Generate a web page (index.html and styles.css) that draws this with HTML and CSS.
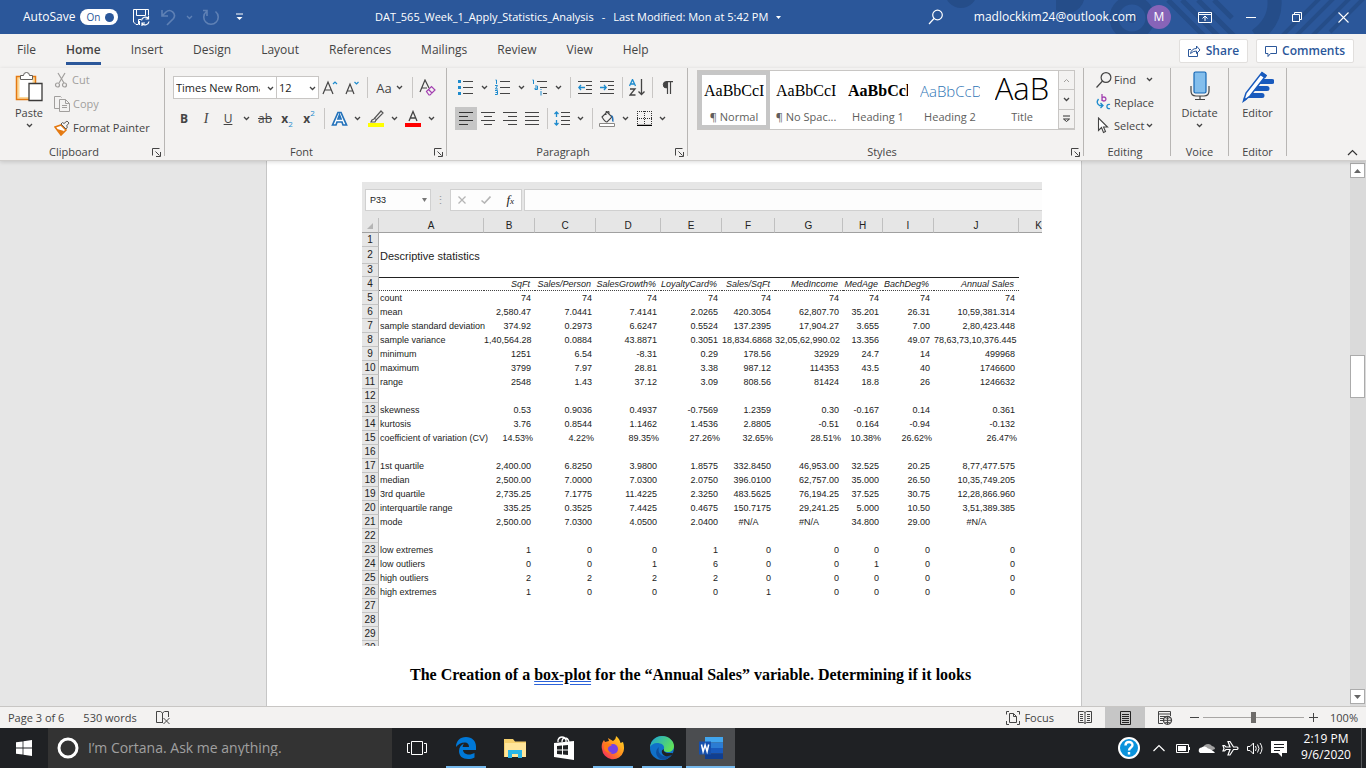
FILE: index.html
```html
<!DOCTYPE html>
<html lang="en">
<head>
    <meta charset="UTF-8">
    <meta name="viewport" content="width=device-width, initial-scale=1.0">
    <title>DAT_565_Week_1_Apply_Statistics_Analysis</title>
    <link rel="stylesheet" href="styles.css">
</head>
<body>
    <!-- Shared icons -->
    <svg class="sprite" aria-hidden="true">
        <symbol id="chev" viewBox="0 0 7 5"><path d="M1 1l2.500 2.500L6 1" fill="none" stroke="currentColor" stroke-width="1.300"/></symbol>
        <symbol id="launch" viewBox="0 0 9 9"><path d="M.5 7.500v-7h7M3.500 3.500l4 4M8.500 4v4.500H4" fill="none" stroke="currentColor"/></symbol>
    </svg>

    <!-- Title Bar -->
    <header class="titlebar">
        <svg class="pattern" viewBox="0 0 430 34" fill="none" stroke="#254d89" aria-hidden="true">
            <circle cx="25" cy="-8" r="12" stroke-width="8"/>
            <path d="M120 0h28a18 18 0 0 1-28 10z" fill="#254d89" stroke="none"/>
            <circle cx="196" cy="18" r="18" stroke-width="9"/><circle cx="196" cy="18" r="5" fill="#254d89" stroke="none"/>
            <path d="M232 0l36 36M246 0l36 36M262 0l36 36M278 0l18 18" stroke-width="5"/>
            <path d="M338-4q4 24-18 40" stroke-width="14"/>
            <path d="M346 36l40-40M360 36l40-40M376 36l40-40M394 32l34-34" stroke-width="4"/>
        </svg>
        <div class="quick">
            <label class="autosave">AutoSave
                <input type="checkbox" class="toggle-input" checked>
                <span class="toggle">On<i></i></span>
            </label>
            <button class="qbtn" aria-label="Save">
                <svg width="17" height="17" viewBox="0 0 17 17" fill="none" stroke="#fff"><path d="M5 15.500H3L.5 13V.5h15v6M3.500.5v6h9v-6M5.500 15.500v-5H8M6.500 12v4"/><path d="M8.500 11.500a4 4 0 0 1 7-2M15.500 7v3h-3M16 12.500a4 4 0 0 1-7 2M9 17v-3h3" stroke-width="1.200"/></svg>
            </button>
            <button class="qbtn dim" aria-label="Undo">
                <svg width="16" height="17" viewBox="0 0 16 17" fill="none" stroke="currentColor" stroke-width="1.600"><path d="M1 1v6h6M1 7l4-4a5 5 0 0 1 7.500 6.500L6 16"/></svg>
            </button>
            <button class="qdrop dim" aria-label="Undo list"><svg width="7" height="5"><use href="#chev"/></svg></button>
            <button class="qbtn dim" aria-label="Redo">
                <svg width="17" height="17" viewBox="0 0 17 17" fill="none" stroke="currentColor" stroke-width="1.600"><path d="M12.500 2.500a7.200 7.200 0 1 1-9 0M4 7V1.500h-4"/></svg>
            </button>
            <button class="qbtn" aria-label="Customize toolbar">
                <svg width="9" height="8" viewBox="0 0 9 8" fill="none" stroke="#fff"><path d="M1 1h7"/><path d="M1.500 4h6l-3 3z" fill="#fff" stroke="none"/></svg>
            </button>
        </div>
        <div class="doc-title"><span>DAT_565_Week_1_Apply_Statistics_Analysis</span><span>-</span><span>Last Modified: Mon at 5:42 PM</span>
            <svg width="5" height="3" viewBox="0 0 5 3"><path d="M0 0h5L2.500 3z" fill="#fff"/></svg>
        </div>
        <div class="account">
            <button class="search-btn" aria-label="Search"><svg width="16" height="16" viewBox="0 0 16 16" fill="none" stroke="#fff" stroke-width="1.200"><circle cx="9.500" cy="6" r="4.800"/><path d="M6 9.500L1 15"/></svg></button>
            <span class="email">madlockkim24@outlook.com</span>
            <span class="avatar">M</span>
        </div>
        <div class="window-btns">
            <button aria-label="Ribbon display options"><svg width="14" height="11" viewBox="0 0 14 11" fill="none" stroke="#fff"><path d="M.5.5h13v10H.5zM.5 2.500h13M7 9V4.500M4.500 6.500L7 4l2.500 2.500"/></svg></button>
            <button aria-label="Minimize"><svg width="10" height="11" viewBox="0 0 10 11" stroke="#fff"><path d="M0 5.500h10"/></svg></button>
            <button aria-label="Restore"><svg width="10" height="10" viewBox="0 0 10 10" fill="none" stroke="#fff"><path d="M.5 2.500h7v7h-7zM2.500 2.500v-2h7v7h-2"/></svg></button>
            <button aria-label="Close"><svg width="11" height="11" viewBox="0 0 11 11" fill="none" stroke="#fff" stroke-width="1.100"><path d="M.5.5l10 10M10.500.5l-10 10"/></svg></button>
        </div>
    </header>

    <!-- Ribbon Tabs -->
    <nav class="tabs">
        <a href="#">File</a>
        <a href="#" class="active">Home</a>
        <a href="#">Insert</a>
        <a href="#">Design</a>
        <a href="#">Layout</a>
        <a href="#">References</a>
        <a href="#">Mailings</a>
        <a href="#">Review</a>
        <a href="#">View</a>
        <a href="#">Help</a>
        <div class="tab-actions">
            <button><svg width="13" height="12" viewBox="0 0 13 12" fill="none" stroke="#2b579a"><path d="M3 4.500H.5v7h9V8M2.500 8.500q1-5 6-5V1l3.500 4-3.500 3.500V6Q5 6 2.500 8.500z"/></svg>Share</button>
            <button><svg width="12" height="11" viewBox="0 0 12 11" fill="none" stroke="#2b579a"><path d="M.5.5h11v7h-6l-2.500 3v-3H.5z"/></svg>Comments</button>
        </div>
    </nav>

    <!-- Ribbon -->
    <div class="ribbon">
        <section class="group clipboard">
            <div class="group-body">
                <button class="big">
                    <svg width="28" height="32" viewBox="0 0 28 32"><path d="M1.500 5.500h19v23h-19z" fill="#fbd99b" stroke="#e47911" stroke-width="1.500"/><path d="M4.500 8h13v18h-13z" fill="#fff"/><path d="M5.500 8.500v-4h3q0-3 3-3t3 3h3v4z" fill="#fff" stroke="#605e5c"/><path d="M14 12.500h13v17H14z" fill="#fff" stroke="#3b3a39" stroke-width="1.300"/></svg>
                    Paste
                    <svg width="7" height="5"><use href="#chev"/></svg>
                </button>
                <div class="stack">
                    <button class="off"><svg width="15" height="17" viewBox="0 0 15 17" fill="none" stroke="#a19f9d" stroke-width="1.200"><path d="M4 1l6 10M11 1L5 11"/><circle cx="3.500" cy="13" r="2"/><circle cx="10.500" cy="13" r="2"/></svg>Cut</button>
                    <button class="off"><svg width="16" height="16" viewBox="0 0 16 16" fill="none" stroke="#a19f9d"><path d="M5 12.500H.5V.5h6l1 1M5.500 3.500h6l4 4v8h-10zM11.500 3.500v4h4M8 9.500h5M8 11.500h5"/></svg>Copy</button>
                    <button><svg width="16" height="16" viewBox="0 0 16 16"><path d="M1 7l6-2 5 5-5 5z" fill="#fff" stroke="#e47911" stroke-width="1.600"/><path d="M3 9l7 2-3 4z" fill="#e47911"/><path d="M7 4l5 5 1.500-2-1-1L15 3l-2-2-3 2.500-1.500-1z" fill="#f3f2f1" stroke="#605e5c"/></svg>Format Painter</button>
                </div>
            </div>
            <div class="group-label">Clipboard<button aria-label="Clipboard options"><svg width="9" height="9"><use href="#launch"/></svg></button></div>
        </section>

        <section class="group font">
            <div class="row">
                <span class="combo combo-name">
                    <select aria-label="Font"><option>Times New Roman</option></select>
                    <svg width="7" height="5"><use href="#chev"/></svg>
                </span>
                <span class="combo combo-size">
                    <select aria-label="Font size"><option>12</option></select>
                    <svg width="7" height="5"><use href="#chev"/></svg>
                </span>
                <button class="tool" aria-label="Grow font"><svg width="16" height="16" viewBox="0 0 16 16" fill="none" stroke="#444" stroke-width="1.200"><path d="M1 14L6 2l5 12M3 10h6"/><path d="M11 4l2-2 2 2" stroke="#1e8bcd"/></svg></button>
                <button class="tool" aria-label="Shrink font"><svg width="16" height="16" viewBox="0 0 16 16" fill="none" stroke="#444" stroke-width="1.200"><path d="M2 14l4-10 4 10M3.500 11h5"/><path d="M10.500 2l2 2 2-2" stroke="#1e8bcd"/></svg></button>
                <i class="sep"></i>
                <button class="case">Aa <svg width="7" height="5"><use href="#chev"/></svg></button>
                <i class="sep"></i>
                <button class="tool" aria-label="Clear formatting"><svg width="17" height="17" viewBox="0 0 17 17" fill="none" stroke="#444" stroke-width="1.200"><path d="M1 13L6 1l4 8M3 9h5"/><path d="M7.500 12.500l5-5 3.500 3.500-5 5h-1zM9.500 10.500l3.500 3.500" stroke="#a23fb0"/></svg></button>
            </div>
            <div class="row">
                <button class="tool"><b>B</b></button>
                <button class="tool serif"><em>I</em></button>
                <button class="tool"><u>U</u></button>
                <button class="drop" aria-label="Underline style"><svg width="7" height="5"><use href="#chev"/></svg></button>
                <button class="tool"><s>ab</s></button>
                <button class="tool"><b>x</b><sub>2</sub></button>
                <button class="tool"><b>x</b><sup>2</sup></button>
                <i class="sep"></i>
                <button class="tool" aria-label="Text effects"><svg width="17" height="16" viewBox="0 0 17 16"><path d="M1.500 14L7 1.500h3L15.500 14h-3.500l-1-3H6l-1 3zM7 8h3L8.500 4z" fill="#fff" stroke="#2372ba" stroke-width="1.700"/></svg></button>
                <button class="drop" aria-label="Effect list"><svg width="7" height="5"><use href="#chev"/></svg></button>
                <button class="tool" aria-label="Highlight"><svg width="16" height="17" viewBox="0 0 16 17"><path d="M4 10l2-1 7-8 2 2-7 7-1 2H3z" fill="#f3f2f1" stroke="#555" stroke-width="1.200"/><path d="M6 8l3 2" stroke="#555"/><path d="M0 13h16v4H0z" fill="#ff0"/></svg></button>
                <button class="drop" aria-label="Highlight color"><svg width="7" height="5"><use href="#chev"/></svg></button>
                <button class="tool" aria-label="Font color"><svg width="16" height="17" viewBox="0 0 16 17"><path d="M4 11l4-9.500L12 11M5.500 8h5" fill="none" stroke="#444" stroke-width="1.300"/><path d="M0 13h16v4H0z" fill="#f00"/></svg></button>
                <button class="drop" aria-label="Font color list"><svg width="7" height="5"><use href="#chev"/></svg></button>
            </div>
            <div class="group-label">Font<button aria-label="Font options"><svg width="9" height="9"><use href="#launch"/></svg></button></div>
        </section>

        <section class="group paragraph">
            <div class="row">
                <button class="tool" aria-label="Bullets"><svg width="16" height="16" viewBox="0 0 16 16"><path d="M0 0h3v3H0zM0 6h3v3H0zM0 12h3v3H0z" fill="#1e8bcd"/><path d="M5 1.500h10M5 7.500h10M5 13.500h10" stroke="#444"/></svg></button>
                <button class="drop" aria-label="Bullet list"><svg width="7" height="5"><use href="#chev"/></svg></button>
                <button class="tool" aria-label="Numbering"><svg width="16" height="17" viewBox="0 0 16 17"><path d="M.5 1h1v4M0 6.500h2.500L.5 10H3M0 11.500h2.500v4H0M.5 13.500h2" fill="none" stroke="#1e8bcd"/><path d="M5 2.500h10M5 8.500h10M5 14.500h10" stroke="#444"/></svg></button>
                <button class="drop" aria-label="Number list"><svg width="7" height="5"><use href="#chev"/></svg></button>
                <button class="tool" aria-label="Multilevel list"><svg width="16" height="17" viewBox="0 0 16 17"><path d="M.5 1h1v4M3 7h2.500v3.500H3V9h2.500M9 12v4.500M9 10v1" fill="none" stroke="#1e8bcd"/><path d="M5 2.500h10M8 8.500h7M11 14.500h4" stroke="#444"/></svg></button>
                <button class="drop" aria-label="Multilevel styles"><svg width="7" height="5"><use href="#chev"/></svg></button>
                <i class="sep"></i>
                <button class="tool" aria-label="Decrease indent"><svg width="15" height="14" viewBox="0 0 15 14" fill="none" stroke="#444"><path d="M0 .5h14M8 4.500h6M8 8.500h6M0 12.500h14"/><path d="M7 6.500H1M3 4L.8 6.500 3 9" stroke="#1e8bcd" stroke-width="1.300"/></svg></button>
                <button class="tool" aria-label="Increase indent"><svg width="15" height="14" viewBox="0 0 15 14" fill="none" stroke="#444"><path d="M0 .5h14M8 4.500h6M8 8.500h6M0 12.500h14"/><path d="M0 6.500h6M4 4l2.200 2.500L4 9" stroke="#1e8bcd" stroke-width="1.300"/></svg></button>
                <i class="sep"></i>
                <button class="tool" aria-label="Sort"><svg width="17" height="17" viewBox="0 0 17 17" fill="none" stroke="#444" stroke-width="1.300"><path d="M.5 7L3.500.5l3 6.500M1.500 5h4" stroke="#1e8bcd"/><path d="M1 10h5l-5 6h5.500M12.500 0v15.500M9.500 12.500l3 3 3-3"/></svg></button>
                <i class="sep"></i>
                <button class="tool" aria-label="Show marks"><svg width="11" height="13" viewBox="0 0 11 13"><path d="M4.500 7a3.200 3.200 0 0 1 0-6.500z" fill="#444" stroke="#444"/><path d="M4 .6h7M5.500.5V13M8.500.5V13" stroke="#444" fill="none" stroke-width="1.200"/></svg></button>
            </div>
            <div class="row">
                <button class="tool on" aria-label="Align left"><svg width="14" height="14" viewBox="0 0 14 14" stroke="#333"><path d="M0 .5h14M0 4.500h9M0 8.500h14M0 12.500h9"/></svg></button>
                <button class="tool" aria-label="Center"><svg width="14" height="14" viewBox="0 0 14 14" stroke="#444"><path d="M0 .5h14M3 4.500h8M0 8.500h14M3 12.500h8"/></svg></button>
                <button class="tool" aria-label="Align right"><svg width="14" height="14" viewBox="0 0 14 14" stroke="#444"><path d="M0 .5h14M5 4.500h9M0 8.500h14M5 12.500h9"/></svg></button>
                <button class="tool" aria-label="Justify"><svg width="14" height="14" viewBox="0 0 14 14" stroke="#444"><path d="M0 .5h14M0 4.500h14M0 8.500h14M0 12.500h14"/></svg></button>
                <i class="sep"></i>
                <button class="tool" aria-label="Line spacing"><svg width="16" height="15" viewBox="0 0 16 15" fill="none" stroke="#444"><path d="M7 1.500h9M7 5.500h9M7 9.500h9M7 13.500h9"/><path d="M2.500 1v5M.5 3l2-2 2 2M2.500 9v5M.5 12l2 2 2-2" stroke="#1e8bcd" stroke-width="1.300"/></svg></button>
                <button class="drop" aria-label="Spacing list"><svg width="7" height="5"><use href="#chev"/></svg></button>
                <i class="sep"></i>
                <button class="tool" aria-label="Shading"><svg width="17" height="16" viewBox="0 0 17 16"><path d="M3 6l5-5 5 5-5 5q-2 0-5-5zM7 4V1.500a1.500 1.500 0 0 1 3 0V4" fill="#f3f2f1" stroke="#444" stroke-width="1.100"/><path d="M12 4q3 0 2.500 7-2 0-1.500-4z" fill="#2372ba"/><path d="M.5 12.500h15v3H.5z" fill="#fff" stroke="#8a8886"/></svg></button>
                <button class="drop" aria-label="Shading color"><svg width="7" height="5"><use href="#chev"/></svg></button>
                <button class="tool" aria-label="Borders"><svg width="15" height="15" viewBox="0 0 15 15" fill="none" stroke="#333"><path d="M.5 0v14M14.500 0v14M0 .5h15M7.500 0v14M0 7.500h15" stroke-dasharray="1 1"/><path d="M0 14.500h15" stroke="#000" stroke-width="1.500"/></svg></button>
                <button class="drop" aria-label="Border list"><svg width="7" height="5"><use href="#chev"/></svg></button>
            </div>
            <div class="group-label">Paragraph<button aria-label="Paragraph options"><svg width="9" height="9"><use href="#launch"/></svg></button></div>
        </section>

        <section class="group styles">
            <div class="gallery">
                <button class="style selected"><span class="sample">AaBbCcI</span>¶ Normal</button>
                <button class="style"><span class="sample">AaBbCcI</span>¶ No Spac...</button>
                <button class="style"><span class="sample strong">AaBbCcl</span>Heading 1</button>
                <button class="style"><span class="sample blue">AaBbCcD</span>Heading 2</button>
                <button class="style"><span class="sample title">AaB</span>Title</button>
                <div class="gallery-nav">
                    <button class="faint" aria-label="Previous styles"><svg width="7" height="5" viewBox="0 0 7 5"><path d="M1 4l2.500-2.500L6 4" fill="none" stroke="currentColor"/></svg></button>
                    <button aria-label="Next styles"><svg width="7" height="5"><use href="#chev"/></svg></button>
                    <button aria-label="More styles"><svg width="9" height="8" viewBox="0 0 9 8" fill="none" stroke="#333"><path d="M1 1h7M1.500 4l3 2.500 3-2.500z"/></svg></button>
                </div>
            </div>
            <div class="group-label">Styles<button aria-label="Styles options"><svg width="9" height="9"><use href="#launch"/></svg></button></div>
        </section>

        <section class="group editing">
            <div class="stack">
                <button><svg width="16" height="16" viewBox="0 0 16 16" fill="none" stroke="#444" stroke-width="1.200"><circle cx="10" cy="5.500" r="4.900"/><path d="M6.500 9L.5 15.500"/></svg>Find <svg class="after" width="7" height="5"><use href="#chev"/></svg></button>
                <button><svg width="16" height="17" viewBox="0 0 16 17" fill="none" stroke-width="1.300"><path d="M6 0v7M6 4.500a2 2 0 1 1 0 1" stroke="#a23fb0"/><path d="M14 10.500a2.200 2.200 0 1 0 0 4M2.500 5q-3 4 1 6.500h3M4.500 9l2.500 2.500L4.500 14" stroke="#1e8bcd"/></svg>Replace</button>
                <button><svg width="16" height="17" viewBox="0 0 16 17" fill="#fff" stroke="#444" stroke-width="1.100"><path d="M2.500 1v12.500l3-3 2 5 2-1-2-4.500h4z"/></svg>Select <svg width="7" height="5"><use href="#chev"/></svg></button>
            </div>
            <div class="group-label">Editing</div>
        </section>

        <section class="group voice">
            <button class="big">
                <svg width="20" height="32" viewBox="0 0 20 32" fill="none" stroke="#444" stroke-width="1.200"><path d="M1 15v5q0 5 5 5h8q5 0 5-5v-5M10 25v3M5 28.500h10"/><rect x="4" y="1" width="12" height="21" rx="1.500" fill="#83beec" stroke="#1467b4"/></svg>
                Dictate
                <svg width="7" height="5"><use href="#chev"/></svg>
            </button>
            <div class="group-label">Voice</div>
        </section>

        <section class="group voice">
            <button class="big">
                <svg width="32" height="32" viewBox="0 0 32 32"><path d="M18 8h12a2.300 2.300 0 0 1 0 5H16zM14 15h11a2.300 2.300 0 0 1 0 5H11zM10 22h10a2.300 2.300 0 0 1 0 5H4z" fill="#185abd"/><path d="M20 1.500l4 3L8 25l-6.500 5L4 22z" fill="#fff" stroke="#185abd" stroke-width="1.500"/><path d="M20 1l5 3.500-2 3-5-3.500zM1 31l1-5 3 2.500z" fill="#185abd"/></svg>
                Editor
            </button>
            <div class="group-label">Editor</div>
        </section>

        <div class="ribbon-end">
            <button aria-label="Collapse ribbon"><svg width="11" height="7" viewBox="0 0 11 7" fill="none" stroke="#333" stroke-width="1.200"><path d="M1 6l4.500-4.500L10 6"/></svg></button>
        </div>
    </div>

    <!-- Document -->
    <main class="workspace">
        <div class="canvas">
            <article class="page">
                <div class="sheet">
                    <div class="formula-bar">
                        <div class="name-box">P33<svg width="5" height="4" viewBox="0 0 5 4"><path d="M0 0h5L2.500 4z" fill="#777"/></svg></div>
                        <span class="dots">⋮</span>
                        <div class="fx">
                            <svg width="8" height="8" viewBox="0 0 8 8" stroke="#b5b5b5" stroke-width="1.300"><path d="M.5.5l7 7M7.500.5l-7 7"/></svg>
                            <svg width="10" height="8" viewBox="0 0 10 8" fill="none" stroke="#b5b5b5" stroke-width="1.600"><path d="M.5 4.500L3.500 7l6-6.500"/></svg>
                            <em>f<small>x</small></em>
                        </div>
                        <div class="formula"></div>
                    </div>
                    <table>
                        <colgroup>
                            <col class="c-num"><col class="c-a"><col class="c-b"><col class="c-c"><col class="c-d"><col class="c-c"><col class="c-f"><col class="c-g"><col class="c-h"><col class="c-b"><col class="c-j"><col class="c-k">
                        </colgroup>
                        <thead>
                            <tr><th><svg width="6" height="6" viewBox="0 0 6 6"><path d="M6 0v6H0z" fill="#b5b5b5"/></svg></th><th>A</th><th>B</th><th>C</th><th>D</th><th>E</th><th>F</th><th>G</th><th>H</th><th>I</th><th>J</th><th class="cut">K</th></tr>
                        </thead>
                        <tbody>
                            <tr><th>1</th><td colspan="11"></td></tr>
                            <tr class="heading"><th>2</th><td colspan="11">Descriptive statistics</td></tr>
                            <tr class="low"><th>3</th><td colspan="11"></td></tr>
                            <tr class="names"><th>4</th><td></td><td>SqFt</td><td>Sales/Person</td><td>SalesGrowth%</td><td>LoyaltyCard%</td><td>Sales/SqFt</td><td>MedIncome</td><td>MedAge</td><td>BachDeg%</td><td>Annual Sales</td></tr>
                            <tr><th>5</th><td>count</td><td>74</td><td>74</td><td>74</td><td>74</td><td>74</td><td>74</td><td>74</td><td>74</td><td>74</td></tr>
                            <tr><th>6</th><td>mean</td><td>2,580.47</td><td>7.0441</td><td>7.4141</td><td>2.0265</td><td>420.3054</td><td>62,807.70</td><td>35.201</td><td>26.31</td><td>10,59,381.314</td></tr>
                            <tr><th>7</th><td>sample standard deviation</td><td>374.92</td><td>0.2973</td><td>6.6247</td><td>0.5524</td><td>137.2395</td><td>17,904.27</td><td>3.655</td><td>7.00</td><td>2,80,423.448</td></tr>
                            <tr><th>8</th><td>sample variance</td><td>1,40,564.28</td><td>0.0884</td><td>43.8871</td><td>0.3051</td><td>18,834.6868</td><td>32,05,62,990.02</td><td>13.356</td><td>49.07</td><td>78,63,73,10,376.445</td></tr>
                            <tr><th>9</th><td>minimum</td><td>1251</td><td>6.54</td><td>-8.31</td><td>0.29</td><td>178.56</td><td>32929</td><td>24.7</td><td>14</td><td>499968</td></tr>
                            <tr><th>10</th><td>maximum</td><td>3799</td><td>7.97</td><td>28.81</td><td>3.38</td><td>987.12</td><td>114353</td><td>43.5</td><td>40</td><td>1746600</td></tr>
                            <tr><th>11</th><td>range</td><td>2548</td><td>1.43</td><td>37.12</td><td>3.09</td><td>808.56</td><td>81424</td><td>18.8</td><td>26</td><td>1246632</td></tr>
                            <tr><th>12</th><td colspan="11"></td></tr>
                            <tr><th>13</th><td>skewness</td><td>0.53</td><td>0.9036</td><td>0.4937</td><td>-0.7569</td><td>1.2359</td><td>0.30</td><td>-0.167</td><td>0.14</td><td>0.361</td></tr>
                            <tr><th>14</th><td>kurtosis</td><td>3.76</td><td>0.8544</td><td>1.1462</td><td>1.4536</td><td>2.8805</td><td>-0.51</td><td>0.164</td><td>-0.94</td><td>-0.132</td></tr>
                            <tr class="percent"><th>15</th><td>coefficient of variation (CV)</td><td>14.53%</td><td>4.22%</td><td>89.35%</td><td>27.26%</td><td>32.65%</td><td>28.51%</td><td>10.38%</td><td>26.62%</td><td>26.47%</td></tr>
                            <tr><th>16</th><td colspan="11"></td></tr>
                            <tr><th>17</th><td>1st quartile</td><td>2,400.00</td><td>6.8250</td><td>3.9800</td><td>1.8575</td><td>332.8450</td><td>46,953.00</td><td>32.525</td><td>20.25</td><td>8,77,477.575</td></tr>
                            <tr><th>18</th><td>median</td><td>2,500.00</td><td>7.0000</td><td>7.0300</td><td>2.0750</td><td>396.0100</td><td>62,757.00</td><td>35.000</td><td>26.50</td><td>10,35,749.205</td></tr>
                            <tr><th>19</th><td>3rd quartile</td><td>2,735.25</td><td>7.1775</td><td>11.4225</td><td>2.3250</td><td>483.5625</td><td>76,194.25</td><td>37.525</td><td>30.75</td><td>12,28,866.960</td></tr>
                            <tr><th>20</th><td>interquartile range</td><td>335.25</td><td>0.3525</td><td>7.4425</td><td>0.4675</td><td>150.7175</td><td>29,241.25</td><td>5.000</td><td>10.50</td><td>3,51,389.385</td></tr>
                            <tr><th>21</th><td>mode</td><td>2,500.00</td><td>7.0300</td><td>4.0500</td><td>2.0400</td><td class="na">#N/A</td><td class="na">#N/A</td><td>34.800</td><td>29.00</td><td class="na">#N/A</td></tr>
                            <tr><th>22</th><td colspan="11"></td></tr>
                            <tr><th>23</th><td>low extremes</td><td>1</td><td>0</td><td>0</td><td>1</td><td>0</td><td>0</td><td>0</td><td>0</td><td>0</td></tr>
                            <tr><th>24</th><td>low outliers</td><td>0</td><td>0</td><td>1</td><td>6</td><td>0</td><td>0</td><td>1</td><td>0</td><td>0</td></tr>
                            <tr><th>25</th><td>high outliers</td><td>2</td><td>2</td><td>2</td><td>2</td><td>0</td><td>0</td><td>0</td><td>0</td><td>0</td></tr>
                            <tr><th>26</th><td>high extremes</td><td>1</td><td>0</td><td>0</td><td>0</td><td>1</td><td>0</td><td>0</td><td>0</td><td>0</td></tr>
                            <tr><th>27</th><td colspan="11"></td></tr>
                            <tr><th>28</th><td colspan="11"></td></tr>
                            <tr><th>29</th><td colspan="11"></td></tr>
                            <tr><th>30</th><td colspan="11"></td></tr>
                        </tbody>
                    </table>
                </div>
                <p>The Creation of a <span class="grammar">box-plot</span> for the “Annual Sales” variable. Determining if it looks</p>
            </article>
        </div>
        <div class="scrollbar">
            <button aria-label="Scroll up"><svg width="7" height="4" viewBox="0 0 7 4"><path d="M3.500 0L7 4H0z" fill="#666"/></svg></button>
            <div class="thumb"></div>
            <button aria-label="Scroll down"><svg width="7" height="4" viewBox="0 0 7 4"><path d="M0 0h7L3.500 4z" fill="#666"/></svg></button>
        </div>
    </main>

    <!-- Status Bar -->
    <footer class="status">
        <span>Page 3 of 6</span>
        <span>530 words</span>
        <svg width="15" height="14" viewBox="0 0 15 14" fill="none" stroke="#444"><path d="M6.500 11.500h-6V.5h4l2 1.500v10M6.500 2l2-1.500h4V6M7.500 7l6 6M13.500 7l-6 6"/></svg>
        <div class="views">
            <button class="focus"><svg width="14" height="14" viewBox="0 0 14 14" fill="none" stroke="#444"><path d="M3 .5H.5v3M11 .5h2.500v3M.5 10v3.500H3M13.500 10v3.500H11M3.500 2.500h4l3 3v6h-7zM7.500 2.500v3h3"/></svg>Focus</button>
            <button class="view" aria-label="Read mode"><svg width="14" height="13" viewBox="0 0 14 13" fill="none" stroke="#444"><path d="M.5.500h5l1.500 1 1.500-1h5v11h-5l-1.500 1-1.500-1h-5zM7 1.500v11M2 3.500h3M2 5.500h3M2 7.500h3M2 9.500h3M9 3.500h3M9 5.500h3M9 7.500h3M9 9.500h3"/></svg></button>
            <button class="view on" aria-label="Print layout"><svg width="11" height="14" viewBox="0 0 11 14" fill="none" stroke="#222"><path d="M.5.500h10v13H.5zM2 3.500h7M2 5.500h7M2 7.500h7M2 9.500h7M2 11.500h7"/></svg></button>
            <button class="view" aria-label="Web layout"><svg width="15" height="14" viewBox="0 0 15 14" fill="none" stroke="#444"><path d="M5 12.500H.5V.500h12V5M.5 3h12M2 5.500h6M2 7.500h4M2 9.500h3"/><circle cx="9.500" cy="9.300" r="4" fill="#f3f2f1" stroke-width="1.300"/><path d="M5.500 9.300h8M9.500 5.300v8M7 6.500q2.500 2 5 0M7 12q2.500-2 5 0"/></svg></button>
            <button class="step" aria-label="Zoom out"><svg width="9" height="9" viewBox="0 0 9 9" stroke="#444"><path d="M0 4.500h9"/></svg></button>
            <input type="range" class="zoom" min="0" max="100" value="50" aria-label="Zoom">
            <button class="step" aria-label="Zoom in"><svg width="9" height="9" viewBox="0 0 9 9" stroke="#444"><path d="M0 4.500h9M4.500 0v9"/></svg></button>
            <span class="percent-label">100%</span>
        </div>
    </footer>

    <!-- Taskbar -->
    <div class="taskbar">
        <button class="start" aria-label="Start"><svg width="16" height="16" viewBox="0 0 16 16" fill="#fff"><path d="M0 2.300L6.600 1.400v6.200H0zM7.400 1.300L16 0v7.600H7.400zM0 8.400h6.600v6.200L0 13.700zM7.400 8.400H16V16l-8.600-1.300z"/></svg></button>
        <label class="cortana">
            <svg width="22" height="22" viewBox="0 0 22 22"><circle cx="11" cy="11" r="9" fill="none" stroke="#fff" stroke-width="3"/></svg>
            <input type="text" placeholder="I’m Cortana. Ask me anything.">
        </label>
        <div class="apps">
            <button aria-label="Task view"><svg width="20" height="14" viewBox="0 0 20 14" fill="none" stroke="#fff"><path d="M4.500.500h11v13h-11zM3 2.500H.5v9H3M17 2.500h2.500v9H17"/></svg></button>
            <button class="open" aria-label="Edge Legacy"><svg width="22" height="22" viewBox="0 0 22 22"><path d="M1 10C1 4 5 0 11 0c6 0 10 4 10 9.500V13H8c.2 3 3 4.500 6 4.500 2 0 4-.6 5.500-1.500v4.500c-2 1-4 1.500-6.500 1.500-5.500 0-9-3-9-8 0-3.500 2-6 5-7.500C8 8 7.700 9 7.700 10H14c0-3-1.500-4.500-4-4.500C6 5.500 3 7.500 1 10z" fill="#0078d7"/></svg></button>
            <button aria-label="File Explorer"><svg width="22" height="19" viewBox="0 0 22 19"><path d="M0 0h9l2 2.500h11V18H0z" fill="#f5d06d"/><path d="M1 4h21v14H1z" fill="#ffe59a"/><path d="M4 19v-8h14v8h-4v-4H8v4z" fill="#29b6e8"/></svg></button>
            <button aria-label="Store"><svg width="22" height="24" viewBox="0 0 22 24"><path d="M1 7l20-2v19L1 21z" fill="#fff"/><path d="M5 6V4q1-3 4-3t4 3v2M9 6q0-4 3-4t4 4" fill="none" stroke="#fff" stroke-width="1.300"/><path d="M4 10l5-.5v4H4zM10 9.400l5-.4v4.500h-5zM4 14.500h5v4L4 18zM10 14.500h5V19l-5-.5z" fill="#202224"/></svg></button>
            <button class="open" aria-label="Firefox">
                <svg width="24" height="24" viewBox="0 0 24 24">
                    <defs><linearGradient id="fox" x1="1" y1="0" x2="0" y2="1"><stop offset="0" stop-color="#ffe226"/><stop offset=".5" stop-color="#ff8a1e"/><stop offset="1" stop-color="#f5156c"/></linearGradient></defs>
                    <path d="M15 0c3 2 4 5 4.500 7L22 6c1 3 1.500 6 .5 9.500A11 11 0 0 1 1 13C0 9 1.500 6 3 4l1 2 4-1-1-3 5 3c2-1 3-3 3-5z" fill="url(#fox)"/>
                    <circle cx="12" cy="13" r="5" fill="#7542e5"/><path d="M3 8q5-2 8 1-3 2-5 2 0 4 5 6-6 0-8-4z" fill="#ff7a16"/>
                </svg>
            </button>
            <button class="open" aria-label="Edge">
                <svg width="24" height="24" viewBox="0 0 24 24">
                    <defs><linearGradient id="wave" x1="0" y1="0" x2="1" y2=".5"><stop offset="0" stop-color="#1ba3d8"/><stop offset="1" stop-color="#5fe05b"/></linearGradient></defs>
                    <circle cx="12" cy="12" r="12" fill="#1071c9"/>
                    <path d="M0 11C1 4 6 0 12 0c7 0 12 5 12 10 0 4-3 6-6 6-4 0-5-2-4-3 1-4-3-6-7-6-3 0-6 2-7 4z" fill="url(#wave)"/>
                    <path d="M9 11c-2 6 3 10 8 9q3-1 5-2c-3 5-8 7-12 5-5-3-5-9-1-12z" fill="#0d4f9e"/>
                    <path d="M14 13c-1 2 1 4 5 4h4l-1 2q-8 3-10-2-1-3 2-4z" fill="#202224"/>
                </svg>
            </button>
            <button class="open current" aria-label="Word">
                <svg width="24" height="22" viewBox="0 0 24 22"><path d="M6 0h18v5.500H6z" fill="#41a5ee"/><path d="M6 5.500h18V11H6z" fill="#2b7cd3"/><path d="M6 11h18v5.500H6z" fill="#185abd"/><path d="M6 16.500h18V22H6z" fill="#103f91"/><path d="M0 4.500h12v13H0z" fill="#1650ad"/><path d="M2.500 7.500l1.600 7 2-6.500 2 6.500 1.600-7" fill="none" stroke="#fff" stroke-width="1.500"/></svg>
            </button>
        </div>
        <div class="tray">
            <svg width="24" height="24" viewBox="0 0 24 24"><circle cx="12" cy="12" r="10" fill="#0a93dc" stroke="#fff" stroke-width="2"/><path d="M8.500 9.500c0-4.500 7-4.500 7-.5 0 2.500-3.500 2.500-3.500 5.500M12 16v2.500" fill="none" stroke="#fff" stroke-width="2.400"/></svg>
            <svg width="24" height="16" viewBox="0 0 24 16" fill="none" stroke="#fff" stroke-width="1.200"><path d="M6.500 11L12 5.500l5.500 5.500"/></svg>
            <svg width="24" height="16" viewBox="0 0 24 16" fill="none" stroke="#fff"><path d="M5.500 4.500h12v8h-12zM18.500 7v3"/><path d="M7 6h8v5H7z" fill="#fff" stroke="none"/></svg>
            <svg width="24" height="16" viewBox="0 0 24 16"><path d="M8 9a5 5 0 0 1 9-3q3 .5 3 3l-5 2z" fill="#a0a0a0"/><path d="M5 13a3 3 0 0 1 1.500-5.500Q10 5 13 8.500q2 0 7 4l-1 .5z" fill="#fff"/></svg>
            <svg width="24" height="16" viewBox="0 0 24 16" fill="none" stroke="#fff" stroke-width="1.200"><path d="M4 5.500h1.500L7 7h4L9 1.500h2L14.500 7H18q2 1 0 2.500h-3.500L11 15H9l2-5.500H7L5.500 11H4l1-2.500z"/></svg>
            <svg width="24" height="16" viewBox="0 0 24 16" fill="none" stroke="#fff"><path d="M4.500 6.500H7l3.500-3.500v11L7 10.500H4.500zM12.500 6q1.500 2.500 0 5M14.500 4.500q3 4 0 8M17 3q4 5.500 0 11"/></svg>
            <svg width="24" height="18" viewBox="0 0 24 18"><path d="M4 2h16v12h-5v4l-4-4H4z" fill="#fff"/><path d="M7 5.500h10M7 8.500h10M7 11.500h6" stroke="#1b1d22"/></svg>
            <div class="clock"><span>2:19 PM</span><span>9/6/2020</span></div>
            <i class="show-desktop"></i>
        </div>
    </div>
</body>
</html>
```

FILE: styles.css
```css
* {
    box-sizing: border-box;
}
body {
    margin: 0;
    height: 100vh;
    display: flex;
    flex-direction: column;
    overflow: hidden;
    font-family: "Open Sans", "Noto Sans", sans-serif;
    font-size: 12px;
    line-height: 16px;
    color: #444;
    background-color: #e6e6e6;
}
button {
    display: flex;
    align-items: center;
    justify-content: center;
    padding: 0;
    border: none;
    background: none;
    color: inherit;
    font: inherit;
    white-space: nowrap;
}
svg {
    flex: none;
}
.sprite {
    position: absolute;
    width: 0;
    height: 0;
}

/* Title bar */
.titlebar {
    position: relative;
    display: flex;
    align-items: center;
    height: 34px;
    flex: none;
    background-color: #2b579a;
    color: #fff;
}
.pattern {
    position: absolute;
    right: 0;
    top: 0;
    width: 430px;
    height: 34px;
}
.quick, .doc-title, .account, .window-btns {
    position: relative;
    display: flex;
    align-items: center;
}
.quick {
    width: 375px;
    padding-left: 23px;
}
.autosave {
    display: flex;
    align-items: center;
    gap: 5px;
}
.toggle-input {
    position: absolute;
    opacity: 0;
}
.toggle {
    display: flex;
    align-items: center;
    justify-content: space-between;
    width: 38px;
    height: 16px;
    padding: 0 4px 0 6px;
    border-radius: 8px;
    background-color: #fff;
    color: #2b579a;
    font-size: 10px;
}
.toggle i {
    width: 9px;
    height: 9px;
    border-radius: 50%;
    background-color: #2b579a;
}
.qbtn {
    width: 26px;
    margin-left: 2px;
}
.qdrop {
    width: 14px;
}
.autosave + .qbtn {
    margin-left: 10px;
}
.qbtn.dim, .qdrop.dim {
    color: #5f81b5;
}
.doc-title {
    gap: 8px;
    font-size: 11px;
}
.account {
    margin-left: auto;
}
.search-btn {
    width: 30px;
    margin-right: 23px;
}
.avatar {
    width: 24px;
    height: 24px;
    margin: 0 11px;
    border-radius: 50%;
    background-color: #8764b8;
    text-align: center;
    line-height: 24px;
}
.window-btns button {
    width: 46px;
    height: 34px;
}

/* Tabs */
.tabs {
    display: flex;
    align-items: center;
    gap: 30px;
    height: 34px;
    flex: none;
    padding: 0 12px 0 17px;
    background-color: #f3f2f1;
    font-size: 12px;
}
.tabs a {
    height: 28px;
    padding-top: 2px;
    line-height: 22px;
    color: #444;
    text-decoration: none;
}
.tabs .active {
    border-bottom: 3px solid #2b579a;
    font-weight: 600;
}
.tab-actions {
    display: flex;
    gap: 8px;
    margin-left: auto;
}
.tab-actions button {
    gap: 5px;
    height: 24px;
    padding: 0 8px;
    border: 1px solid #e1dfdd;
    border-radius: 2px;
    background-color: #fff;
    color: #2b579a;
    font-weight: 600;
}

/* Ribbon */
.ribbon {
    position: relative;
    z-index: 1;
    display: flex;
    height: 93px;
    flex: none;
    padding-bottom: 4px;
    border-bottom: 1px solid #d0cecc;
    background-color: #f3f2f1;
    box-shadow: 0 1px 4px rgba(0, 0, 0, 0.15);
    font-size: 11px;
}
.group {
    display: flex;
    flex-direction: column;
    flex: none;
    border-right: 1px solid #b8b6b4;
}
.clipboard {
    width: 165px;
}
.font {
    width: 282px;
    padding: 4px 0 0 8px;
}
.paragraph {
    width: 241px;
    padding: 4px 0 0 8px;
}
.styles {
    flex: 1;
    padding: 2px 0 0 9px;
}
.editing {
    width: 87px;
    padding-left: 12px;
}
.voice {
    width: 58px;
}
.ribbon-end {
    width: 79px;
    display: flex;
    align-items: flex-end;
    justify-content: flex-end;
    padding-right: 8px;
}
.group-body {
    display: flex;
    padding-left: 12px;
}
.big {
    flex-direction: column;
    justify-content: flex-start;
    gap: 2px;
    padding-top: 3px;
}
.clipboard .big {
    width: 34px;
    margin-right: 8px;
}
.stack {
    display: flex;
    flex-direction: column;
}
.stack button {
    justify-content: flex-start;
    gap: 3px;
    height: 24px;
}
.editing .stack button {
    gap: 2px;
    height: 23px;
}
.off {
    color: #a19f9d;
}
.editing .after {
    margin-left: 8px;
}
.group-label {
    position: relative;
    height: 16px;
    margin: auto 0 -4px;
    padding-right: 16px;
    text-align: center;
}
.voice .group-label {
    padding-right: 0;
}
.group-label button {
    position: absolute;
    right: 3px;
    top: 4px;
}
.row {
    display: flex;
    align-items: center;
    height: 31px;
}
.tool {
    width: 22px;
    height: 23px;
    font-size: 12px;
}
.tool.on {
    background-color: #c6c6c6;
}
.tool sub, .tool sup {
    font-size: 8px;
    line-height: 8px;
    color: #1e8bcd;
}
.tool sub {
    align-self: flex-end;
    margin-bottom: 2px;
}
.tool sup {
    align-self: flex-start;
    margin-top: 2px;
}
.serif {
    font-family: "Liberation Serif", serif;
    font-size: 14px;
}
.drop {
    width: 15px;
    height: 23px;
}
.sep {
    width: 1px;
    height: 21px;
    margin: 0 3px 0 4px;
    background-color: #c8c6c4;
}
.case {
    gap: 4px;
    width: 37px;
    font-size: 13px;
}
.combo {
    position: relative;
    height: 23px;
}
.combo select {
    width: 100%;
    height: 23px;
    padding: 0 16px 0 2px;
    border: 1px solid #c8c6c4;
    border-radius: 0;
    background-color: #fff;
    color: #222;
    font: inherit;
    appearance: none;
}
.combo svg {
    position: absolute;
    right: 3px;
    top: 10px;
}
.combo-name {
    width: 104px;
}
.combo-size {
    width: 43px;
    margin-left: -1px;
}
.gallery {
    display: flex;
    width: 378px;
    height: 60px;
    border: 1px solid #c8c6c4;
    background-color: #fff;
}
.style {
    flex-direction: column;
    justify-content: flex-start;
    width: 72px;
    height: 58px;
    padding: 0 2px;
    border: 4px solid #fff;
    overflow: hidden;
    color: #605e5c;
}
.style.selected {
    border-color: #c6c6c6;
}
.sample {
    height: 36px;
    line-height: 32px;
    color: #000;
    font-family: "Liberation Serif", serif;
    font-size: 16px;
    max-width: 60px;
    overflow: hidden;
}
.sample.strong {
    font-weight: bold;
}
.sample.blue {
    color: #2e74b5;
    font-family: "Open Sans", sans-serif;
    font-weight: 300;
    font-size: 15px;
}
.sample.title {
    font-family: "Open Sans", sans-serif;
    font-weight: 300;
    font-size: 31px;
    line-height: 26px;
}
.gallery-nav {
    display: flex;
    flex-direction: column;
    width: 16px;
    margin-left: auto;
    border-left: 1px solid #c8c6c4;
}
.gallery-nav button {
    flex: 1;
    border-bottom: 1px solid #c8c6c4;
    background-color: #f3f2f1;
}
.gallery-nav .faint {
    color: #a19f9d;
}

/* Document */
.workspace {
    flex: 1;
    display: flex;
    min-height: 0;
}
.canvas {
    flex: 1;
    display: flex;
    justify-content: center;
    padding-right: 2px;
    overflow: hidden;
}
.page {
    width: 816px;
    padding: 21px 39px 0 95px;
    border: 1px solid #c6c6c6;
    border-width: 0 1px;
    background-color: #fff;
    color: #000;
}
.page p {
    margin: 20px 0 0;
    text-indent: 48px;
    font-family: "Liberation Serif", serif;
    font-size: 16px;
    font-weight: bold;
    line-height: 18px;
    white-space: nowrap;
}
.grammar {
    text-decoration: underline double #2b62d9;
}
.sheet {
    width: 680px;
    height: 464px;
    overflow: hidden;
    font-family: "Liberation Sans", sans-serif;
    font-size: 9px;
    color: #222;
}
.formula-bar {
    display: flex;
    align-items: center;
    height: 36px;
    padding-left: 3px;
    background-color: #e6e6e6;
}
.name-box, .fx, .formula {
    display: flex;
    align-items: center;
    height: 22px;
    border: 1px solid #d0d0d0;
    background-color: #fdfdfd;
}
.name-box {
    justify-content: space-between;
    width: 66px;
    padding: 0 3px 0 4px;
}
.dots {
    width: 19px;
    text-align: center;
    font-size: 11px;
    color: #999;
}
.fx {
    justify-content: space-between;
    width: 72px;
    padding: 0 7px;
    font-family: "Liberation Serif", serif;
    font-size: 13px;
}
.fx small {
    font-size: 9px;
}
.formula {
    flex: 1;
    margin-left: 2px;
    border-right: none;
}
.sheet table {
    width: 680px;
    table-layout: fixed;
    border-collapse: separate;
    border-spacing: 0;
}
.sheet th, .sheet td {
    height: 14px;
    padding: 0 4px 0 0;
    line-height: 13px;
    text-align: right;
    white-space: nowrap;
    font-weight: normal;
}
.sheet tbody th {
    padding: 0;
    border-right: 1px solid #b0b0b0;
    border-bottom: 1px solid #c4c4c4;
    background-color: #e6e6e6;
    font-size: 10px;
    text-align: center;
}
.sheet tbody td:nth-child(2) {
    padding: 0 0 0 1px;
    text-align: left;
}
.sheet thead th {
    height: 15px;
    padding: 0;
    border-right: 1px solid #c0c0c0;
    border-bottom: 1px solid #a0a0a0;
    background-color: #e6e6e6;
    font-size: 10px;
    text-align: center;
}
.sheet thead .cut {
    border-right: none;
    text-align: right;
}
.sheet .heading th, .sheet .heading td {
    height: 17px;
    line-height: 16px;
}
.sheet .heading td {
    font-size: 11px;
}
.sheet .low th, .sheet .low td {
    height: 13px;
    line-height: 12px;
}
.sheet .names td {
    padding-right: 5px;
    border-top: 1px solid #222;
    border-bottom: 1px dotted #444;
    line-height: 12px;
    font-style: italic;
}
.sheet .percent td {
    padding-right: 2px;
}
.sheet .na {
    padding: 0;
    text-align: center;
}
.c-num { width: 17px; }
.c-a { width: 105px; }
.c-b { width: 51px; }
.c-c { width: 61px; }
.c-d { width: 65px; }
.c-f { width: 53px; }
.c-g { width: 68px; }
.c-h { width: 40px; }
.c-j { width: 85px; }
.c-k { width: 23px; }

/* Scrollbar */
.scrollbar {
    display: flex;
    flex-direction: column;
    width: 16px;
    padding: 2px 1px 2px 0;
    background-color: #dadada;
}
.scrollbar button {
    width: 15px;
    height: 15px;
    border: 1px solid #ababab;
    background-color: #fff;
}
.scrollbar .thumb {
    height: 43px;
    margin: 177px 0 auto;
    border: 1px solid #ababab;
    background-color: #fff;
}

/* Status bar */
.status {
    display: flex;
    align-items: center;
    gap: 19px;
    height: 22px;
    flex: none;
    padding: 0 8px;
    border-top: 1px solid #c8c6c4;
    background-color: #f3f2f1;
    font-size: 11px;
}
.views {
    display: flex;
    align-items: center;
    height: 21px;
    margin-left: auto;
}
.focus {
    gap: 4px;
    margin-right: 11px;
}
.view {
    width: 40px;
    height: 21px;
}
.view.on {
    background-color: #c6c6c6;
}
.step {
    width: 18px;
}
.zoom {
    width: 101px;
    height: 12px;
    margin: 0;
    appearance: none;
    background: linear-gradient(#a8a6a4, #a8a6a4) center / 100% 1px no-repeat;
}
.zoom::-webkit-slider-thumb {
    appearance: none;
    width: 5px;
    height: 11px;
    background-color: #6e6c6a;
}
.percent-label {
    width: 36px;
    text-align: right;
}

/* Taskbar */
.taskbar {
    display: flex;
    height: 40px;
    flex: none;
    background-color: #1f2124;
    color: #fff;
}
.start {
    width: 48px;
}
.cortana {
    display: flex;
    align-items: center;
    gap: 9px;
    width: 344px;
    padding-left: 9px;
    background-color: #333;
}
.cortana input {
    flex: 1;
    border: none;
    background: none;
    color: #fff;
    font: inherit;
    font-size: 14px;
    padding: 0;
}
.cortana input::placeholder {
    color: #a0a0a0;
}
.apps {
    display: flex;
}
.apps button {
    width: 49px;
    height: 40px;
}
.apps .open {
    background: linear-gradient(#76b9ed, #76b9ed) center bottom / 40px 2px no-repeat;
}
.apps .current {
    background-color: #4b4d50;
    background-size: 100% 2px;
}
.tray {
    display: flex;
    align-items: center;
    margin-left: auto;
}
.tray > svg:first-child {
    margin-right: 6px;
}
.clock {
    display: flex;
    flex-direction: column;
    align-items: center;
    width: 70px;
    padding-bottom: 2px;
}
.show-desktop {
    width: 5px;
    height: 40px;
    border-left: 1px solid #55575a;
}
```
